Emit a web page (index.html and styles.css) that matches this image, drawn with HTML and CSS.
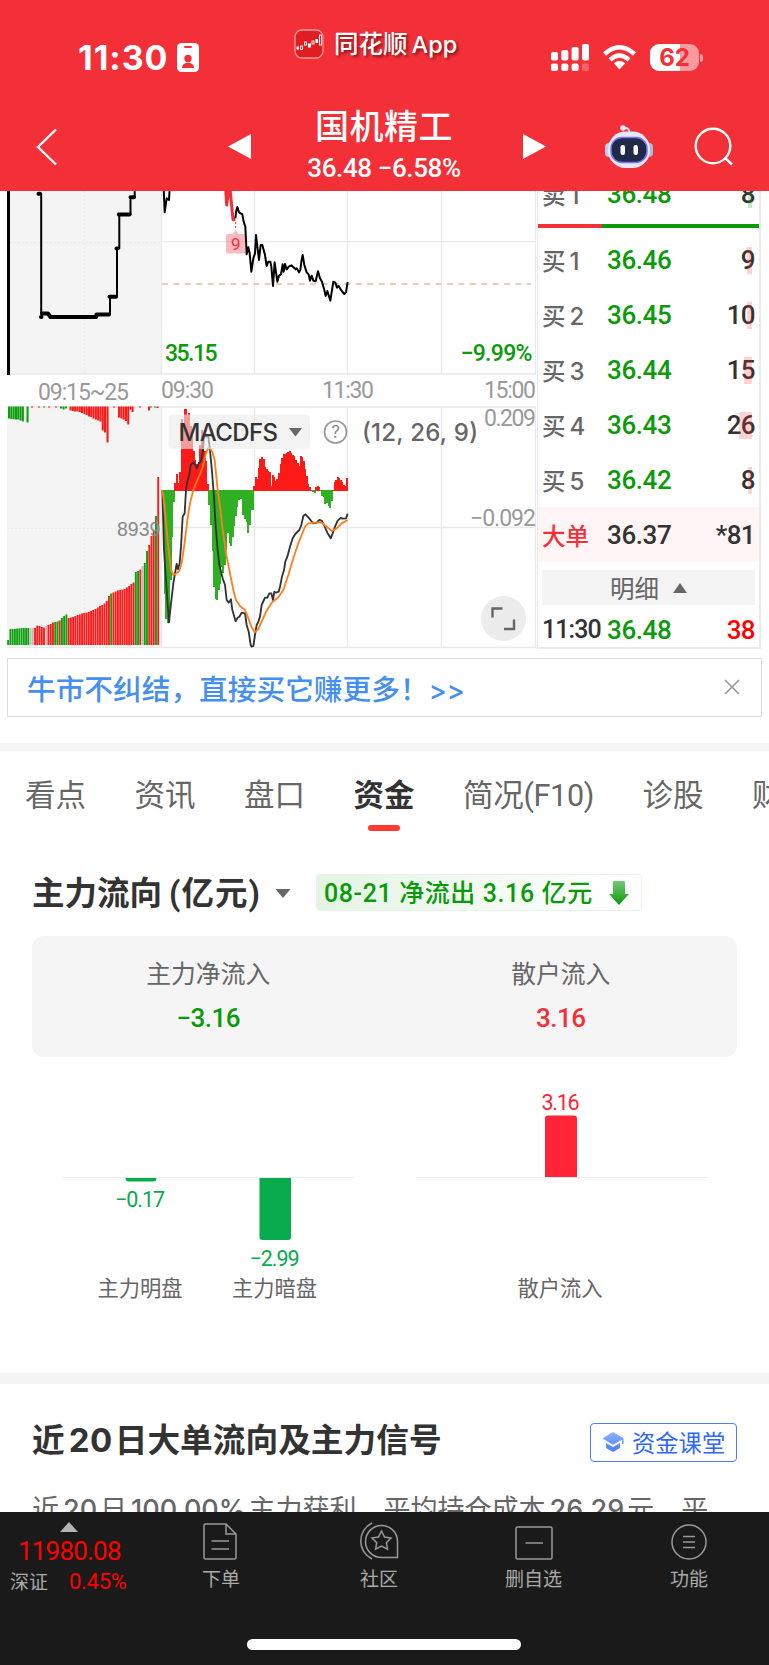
FILE: index.html
```
<!DOCTYPE html>
<html lang="zh-CN">
<head>
  <meta charset="UTF-8" />
  <meta name="viewport" content="width=device-width, initial-scale=1.0" />
  <title>国机精工</title>
  <link rel="stylesheet" href="styles.css">
</head>
<body>
  <header class="header">
    <div class="status">
      <span class="clock">11:30</span>
      <svg class="id-icon" width="22" height="29" viewBox="0 0 22 29">
        <rect width="22" height="29" rx="4.500" fill="#fff"/>
        <rect x="7" y="3" width="8" height="2" rx="1" fill="#f33038"/>
        <circle cx="11" cy="15.500" r="3.700" fill="#f33038"/>
        <path d="M5 25c0-7 12-7 12 0z" fill="#f33038"/>
      </svg>
      <svg class="app-icon" width="30" height="30" viewBox="0 0 30 30">
        <rect x="1" y="1" width="28" height="28" rx="7" fill="#e01d20" stroke="#f79a9c" stroke-width="1.300"/>
        <g fill="#fff"><rect x="2.500" y="17.500" width="2.500" height="3"/><rect x="14" y="14.500" width="3" height="4"/><rect x="21.500" y="10" width="2.500" height="4"/></g>
        <g fill="none" stroke="#fff" stroke-width=".9"><rect x="6.500" y="17" width="2" height="3.500"/><rect x="10.500" y="13" width="2" height="3"/><rect x="18" y="12" width="2" height="3"/><rect x="25.500" y="6" width="2" height="10"/></g>
      </svg>
      <span class="app-name">同花顺<b>App</b></span>
      <svg class="signal" width="39" height="28" viewBox="0 0 39 28" fill="#fff">
        <rect x="0" y="8" width="7" height="8.500" rx="2"/><rect x="10.300" y="6" width="7" height="10.500" rx="2"/><rect x="20.600" y="3" width="7" height="13.500" rx="2"/><rect x="31" y="0" width="7" height="16.500" rx="2"/>
        <rect x="0" y="19.500" width="7" height="7.500" rx="2"/><rect x="10.300" y="19.500" width="7" height="7.500" rx="2"/><rect x="20.600" y="19.500" width="7" height="7.500" rx="2"/><rect x="31" y="19.500" width="7" height="7.500" rx="2" opacity=".25"/>
      </svg>
      <svg class="wifi" width="33" height="25" viewBox="0 0 33 25">
        <g fill="none" stroke="#fff" stroke-width="4.400"><path d="M1.500 9Q16.500-4.500 31.500 9"/><path d="M7 14.800Q16.500 6.200 26 14.800"/></g>
        <path d="M10.800 18.300Q16.500 13.700 22.200 18.300L16.500 24.500z" fill="#fff"/>
      </svg>
      <div class="battery">62</div>
      <i class="battery-cap"></i>
    </div>
    <div class="navbar">
      <svg class="back" width="22" height="38" viewBox="0 0 22 38"><path d="M20 1.500L2 19l18 17.500" fill="none" stroke="#fff" stroke-width="2.400"/></svg>
      <svg class="prev" width="23" height="25" viewBox="0 0 23 25"><path d="M23 0v25L0 12.500z" fill="#fff"/></svg>
      <div class="stock">
        <h1>国机精工</h1>
        <p>36.48 −6.58%</p>
      </div>
      <svg class="next" width="23" height="25" viewBox="0 0 23 25"><path d="M0 0v25l23-12.500z" fill="#fff"/></svg>
      <svg class="robot" width="48" height="44" viewBox="0 0 48 44">
        <path d="M18 3.500q6-2 6.500 4" fill="none" stroke="#dfe0fa" stroke-width="2"/>
        <circle cx="18" cy="3" r="2.800" fill="#e8e8ff"/>
        <rect x="0" y="18" width="8" height="14" rx="4" fill="#c9cbee"/><rect x="40" y="18" width="8" height="14" rx="4" fill="#b4b5df"/>
        <rect x="3" y="6.500" width="42" height="36.500" rx="17.500" fill="#e6e7fa"/>
        <rect x="6" y="12.500" width="36" height="25" rx="11" fill="#20294a" stroke="#7776e8" stroke-width="1.500"/>
        <rect x="15.500" y="20" width="4.500" height="10" rx="2.200" fill="#fff"/><rect x="28.500" y="20" width="4.500" height="10" rx="2.200" fill="#fff"/>
      </svg>
      <svg class="search" width="40" height="40" viewBox="0 0 40 40" fill="none" stroke="#fff" stroke-width="2.400"><circle cx="19" cy="19" r="17.300"/><path d="M31 31l7 6.500"/></svg>
    </div>
  </header>

  <main>
    <section class="quote">
      <svg class="chart" width="537" height="459" viewBox="0 191 537 459">
        <rect x="7" y="191" width="154" height="183" fill="#f4f4f4"/>
        <rect x="7" y="406" width="154" height="242" fill="#f4f4f4"/>
        <g stroke="#e6e6e6" stroke-dasharray="1.500 2.500">
          <path d="M84.500 191V374M84.500 407V648M10 242.500H161M7 528.500H161"/>
        </g>
        <g stroke="#e9e9e9" stroke-width="1.300" fill="none">
          <path d="M161.500 191V374M254.500 191V374M347.500 191V374M441.500 191V374M535.500 191V374M161 241.700H536M7 374H536"/>
          <path d="M161.500 407V648M254.500 407V648M347.500 407V648M441.500 407V648M535.500 407V648M161 527.500H536M7 407H536M7 647.500H537"/>
        </g>
        <path d="M162 284H531" stroke="#dfc09a" stroke-width="1.300" stroke-dasharray="6 5.400"/>
        <path d="M8.500 191V375" stroke="#000" stroke-width="3"/>

        <!-- call auction -->
        <g fill="none" stroke="#000" stroke-linecap="round" stroke-linejoin="round">
          <path d="M41.200 194V314M110 314V297M117 297V248.500M119.300 248.500V214.500M130.500 214.500V197.500M134.700 197V190" stroke-width="2"/>
          <path d="M38.500 193.700h1.500M41 317h.5M42 313.500h6l2.500 3.500H96l.500-2.500H109M109.500 296.700H116M116.500 248.500h1M118.800 214.400H129.500M130.500 197.300H134" stroke-width="4"/>
        </g>

        <!-- intraday price -->
        <g transform="translate(150 185) scale(.33333)" fill="none" stroke="#000" stroke-width="6" stroke-linejoin="round">
          <path d="M41 10 44 82 50 40 57 45 59 10"/>
          <path stroke="#f33038" stroke-width="9" d="M227 10 230 60 237 10 240 10 249 104 256 103"/>
          <path d="M256 100 258 82 262 66 267 82 277 88 281 110 286 125 290 208 295 187 299 205 304 260 310 220 315 205 318 150 327 225 332 180 337 180 345 210 350 243 355 230 361 230 364 245 369 303 374 232 378 262 382 290 387 272 393 268 398 238 401 260 405 237 410 253 416 245 424 241 437 253 440 250 447 262 451 255 454 230 458 210 463 240 470 262 476 268 480 287 485 272 490 287 497 289 504 259 510 280 516 290 523 315 527 333 532 318 541 347 550 290 556 293 561 308 566 303 575 318 583 327 588 322 593 291"/>
        </g>
        <path d="M235.700 222V230" stroke="#f33038" stroke-dasharray="2 2"/>
        <path d="M228 234h4.500l3.200-4 3.200 4H244q1.500 0 1.500 1.500V252q0 1.500-1.500 1.500H227.500q-1.500 0-1.500-1.500V235.500q0-1.500 1.500-1.500z" fill="#f33038" opacity=".32"/>
        <text class="nine" x="235.700" y="249.500">9</text>

        <text class="num green" x="165" y="361" textLength="52.500">35.15</text>
        <text class="num green" x="460.500" y="361" textLength="72">−9.99%</text>
        <text class="num gray" x="38" y="400" textLength="91">09:15~25</text>
        <text class="num gray" x="161" y="398" textLength="53">09:30</text>
        <text class="num gray" x="322" y="398" textLength="52">11:30</text>
        <text class="num gray" x="484" y="398" textLength="52">15:00</text>

        <g id="auction"></g>
        <text class="vol" x="117" y="536">8939</text>
        <g id="macd" shape-rendering="crispEdges"></g>
        <g transform="translate(150 400) scale(.33333)" fill="none" stroke-width="5.500" stroke-linejoin="round">
          <path stroke="#333" d="M37 270 42 450 50 570 57 667 62 620 70 550 75 520 80 492 84 508 89 490 93 440 98 350 104 340 108 270 112 245 118 225 122 195 131 187 136 195 141 205 146 190 152 185 158 160 162 110 175 110 180 150 186 215 192 290 197 380 203 450 208 495 218 535 225 555 230 600 236 608 243 598 247 630 257 664 263 653 268 650 275 638 285 640 290 675 296 695 302 735 305 740 310 738 315 705 320 675 325 665 330 650 335 615 345 593 352 593 358 580 364 580 369 600 373 575 378 578 386 575 390 560 396 530 402 510 406 485 412 470 420 440 428 415 436 402 448 390 454 375 460 348 466 343 475 352 484 363 490 370 500 368 508 360 515 362 522 375 532 398 542 415 548 400 555 380 563 362 572 354 580 356 588 355 593 341"/>
          <path stroke="#ff7f1f" d="M37 270 44 320 50 390 57 460 63 510 70 525 80 520 88 512 95 490 105 420 112 360 120 310 130 270 140 245 152 218 160 195 168 160 174 145 180 145 188 158 194 180 202 260 210 320 220 405 230 470 240 520 250 570 258 600 270 618 285 630 295 655 305 682 314 697 325 687 335 665 350 632 365 608 385 592 400 570 415 525 430 475 445 430 455 405 465 380 475 370 490 368 515 368 530 380 545 393 560 385 575 370 593 360"/>
        </g>

        <rect x="168.500" y="414.500" width="141.500" height="34.500" rx="4" fill="#ececec" fill-opacity=".62"/>
        <text class="ind" x="178.500" y="441" textLength="99.500">MACDFS</text>
        <path d="M289 428h13l-6.500 8.500z" fill="#666"/>
        <circle cx="335.500" cy="432" r="11" fill="none" stroke="#999" stroke-width="1.700"/>
        <text class="help" x="335.500" y="438">?</text>
        <text class="param" x="362" y="440.500" textLength="116">(12, 26, 9)</text>
        <text class="num gray" x="484" y="426" textLength="52">0.209</text>
        <text class="num gray" x="470" y="526" textLength="66">−0.092</text>
        <circle cx="503.500" cy="618.500" r="22.500" fill="#ececec"/>
        <path d="M492.500 617.500V608.500H502.500M504 629H514V619.500" fill="none" stroke="#666" stroke-width="2.400"/>
      </svg>

      <div class="book">
        <div class="row ask"><span class="label">卖<b>1</b></span><span class="price">36.48</span><span class="qty">8<i class="depth sell" style="width:4px"></i></span></div>
        <div class="ratio"><i></i></div>
        <div class="row"><span class="label">买<b>1</b></span><span class="price">36.46</span><span class="qty">9<i class="depth" style="width:5px"></i></span></div>
        <div class="row"><span class="label">买<b>2</b></span><span class="price">36.45</span><span class="qty">10<i class="depth" style="width:5px"></i></span></div>
        <div class="row"><span class="label">买<b>3</b></span><span class="price">36.44</span><span class="qty">15<i class="depth" style="width:8px"></i></span></div>
        <div class="row"><span class="label">买<b>4</b></span><span class="price">36.43</span><span class="qty">26<i class="depth" style="width:13px"></i></span></div>
        <div class="row"><span class="label">买<b>5</b></span><span class="price">36.42</span><span class="qty">8<i class="depth" style="width:4px"></i></span></div>
        <div class="row big"><span class="label">大单</span><span class="price">36.37</span><span class="qty">*81</span></div>
        <div class="detail">明细<svg width="14" height="10" viewBox="0 0 14 10"><path d="M7 0l7 10H0z" fill="#666"/></svg></div>
        <div class="row tick"><span class="time">11:30</span><span class="price">36.48</span><span class="qty">38</span></div>
      </div>
    </section>

    <div class="banner">
      <span>牛市不纠结，直接买它赚更多！<b>&gt;&gt;</b></span>
      <svg width="16" height="16" viewBox="0 0 16 16"><path d="M1 1l14 14M15 1L1 15" stroke="#999" stroke-width="1.600"/></svg>
    </div>

    <nav class="tabs">
      <a>看点</a>
      <a>资讯</a>
      <a>盘口</a>
      <a class="active">资金</a>
      <a class="f10">简况(F10)</a>
      <a>诊股</a>
      <a>财务</a>
    </nav>

    <section class="flow">
      <div class="flow-head">
        <h2>主力流向<span>(亿元)</span></h2>
        <svg width="16" height="9" viewBox="0 0 16 9"><path d="M.5 0h15L8 9z" fill="#666"/></svg>
        <div class="badge">
          <span>08-21 净流出 3.16 亿元</span>
          <svg width="20" height="24" viewBox="0 0 20 24">
            <defs><linearGradient id="down" x1="0" y1="0" x2="0" y2="1"><stop offset="0" stop-color="#76c976"/><stop offset="1" stop-color="#0a9a0a"/></linearGradient></defs>
            <path d="M5 0h10q1 0 1 1v12h4L10 24 0 13h4V1q0-1 1-1z" fill="url(#down)"/>
          </svg>
        </div>
      </div>
      <div class="summary">
        <div><p>主力净流入</p><strong class="down">−3.16</strong></div>
        <div><p>散户流入</p><strong class="up">3.16</strong></div>
      </div>
      <svg class="bars" width="769" height="240" viewBox="0 1070 769 240">
        <path d="M63 1177.500H354M416 1177.500H707" stroke="#ebebeb"/>
        <path d="M125.500 1178h31q0 3.500-3 3.500h-25q-3 0-3-3.500z" fill="#07ab4b"/>
        <path d="M259.500 1178H291v59q0 3-3 3H262.500q-3 0-3-3z" fill="#07ab4b"/>
        <path d="M545 1177V1118.500q0-3 3-3H574q3 0 3 3V1177z" fill="#ff2436"/>
        <g class="bar-num">
          <text x="140" y="1207" fill="#07ab4b" textLength="50">−0.17</text>
          <text x="274.500" y="1265.500" fill="#07ab4b" textLength="50">−2.99</text>
          <text x="560.500" y="1109.500" fill="#ff2436" textLength="38">3.16</text>
        </g>
        <g class="bar-name">
          <text x="140" y="1296">主力明盘</text>
          <text x="274.500" y="1296">主力暗盘</text>
          <text x="560" y="1296">散户流入</text>
        </g>
      </svg>
    </section>

    <section class="signal-box">
      <div class="signal-head">
        <h2>近<span>20</span>日大单流向及主力信号</h2>
        <a class="lesson">
          <svg width="22" height="20" viewBox="0 0 22 20">
            <defs><linearGradient id="cap" x1="0" y1="0" x2="0" y2="1"><stop offset="0" stop-color="#8fb3ff"/><stop offset="1" stop-color="#4a7dff"/></linearGradient></defs>
            <path d="M11 0l10.500 6.300V12H20V7.700l-9 5L.5 6.500zM4 11l7 4 7-4v5l-7 4-7-4z" fill="url(#cap)"/>
          </svg>资金课堂</a>
      </div>
      <p class="signal-text">近<b>20</b>日<b class="pct">100.00%</b>主力获利，平均持仓成本<b>26.29</b>元，平</p>
    </section>
  </main>

  <footer class="toolbar">
    <div class="items">
      <div class="index">
        <svg width="18" height="10" viewBox="0 0 18 10"><path d="M9 0l9 10H0z" fill="#b3b3b3"/></svg>
        <strong>11980.08</strong>
        <p>深证<em>0.45%</em></p>
      </div>
      <div class="item order">
        <svg width="34" height="37" viewBox="0 0 34 37"><path d="M2.500 1H23l10 10v23.500q0 1.500-1.500 1.500H2.500Q1 36 1 34.500V2.500Q1 1 2.500 1zM23 1v10h10M8.500 18H26M8.500 26H26"/></svg>
        下单
      </div>
      <div class="item club">
        <svg width="40" height="38" viewBox="0 0 40 38"><path d="M38.500 35.500V19A16 16 0 1 0 22.500 35.500zM13 1A20 20 0 0 0 13 37"/><path d="M22.500 9l3 6 6.500 1-4.600 4.700 1.100 6.500-6-3.100-5.900 3.100 1.100-6.500L13 16l6.500-1z"/></svg>
        社区
      </div>
      <div class="item remove">
        <svg width="38" height="34" viewBox="0 0 38 34"><rect x="1" y="1" width="36" height="32" rx="1.500"/><path d="M10.500 17H28"/></svg>
        删自选
      </div>
      <div class="item more">
        <svg width="36" height="36" viewBox="0 0 36 36"><circle cx="18" cy="18" r="17"/><path d="M12 12.500H24M12 18H24M12 23.500H24"/></svg>
        功能
      </div>
    </div>
    <div class="home"></div>
  </footer>

  <script>
    const NS = 'http://www.w3.org/2000/svg';

    function addBar(parent, x, y, w, h, color) {
      const rect = document.createElementNS(NS, 'rect');
      rect.setAttribute('x', x);
      rect.setAttribute('y', y);
      rect.setAttribute('width', w);
      rect.setAttribute('height', h);
      rect.setAttribute('fill', color);
      parent.appendChild(rect);
    }

    const colors = { g: '#0fa00f', r: '#ff1a1a', n: '#bdbdbd' };

    // Call auction: matched volume (from the bottom)
    const auction = document.getElementById('auction');
    const matched = [
      5,16,16,16,16.5,16.7,17,17,17,17,17,17,17,19.5,19,18,17.5,19,20,21,22.5,23,23.5,24.5,27,29,30.5,
      27,27.5,28,29,30,30.5,31.5,32,32.5,33,34,35,36,37.5,39,40,41.5,44,49,51.5,52.5,53.5,54.5,
      55,55.5,56,57.5,59,61,62.5,73,74,75.5,79,82,94,100,109,115,129,168];
    const kinds = 'ggggggggggnnrrrrrnrrrggrgggrrrrrrrrrrrrrrrrrrrgrrrrrrrrrrggrnggrrrgr';
    matched.forEach((v, i) => {
      addBar(auction, 7.2 + i * 2.24, 645 - v, 1.9, v, colors[kinds[i]]);
    });

    // Call auction: unmatched volume (from the top)
    const unmatched = [
      [8,12,'g'],[10.3,12.5,'g'],[12.6,12.7,'g'],[14.9,13,'g'],[17.2,13,'g'],[19.5,14,'g'],[21.8,15,'g'],[26.5,16,'g'],
      [31,1,'r'],[38,1,'r'],[43,1,'g'],[48,1,'r'],[55,1,'r'],[60,2,'g'],[62.5,3,'g'],[65,2,'g'],
      [69.5,4,'r'],[71.8,4.5,'r'],[74.1,5,'r'],[76.4,5,'r'],[78.7,5.5,'r'],[81,6.5,'r'],[83.3,7.5,'r'],[85.6,8.5,'r'],
      [87.9,10,'r'],[90.2,10.5,'r'],[92.5,12,'r'],[94.8,13,'r'],[97.1,14,'r'],[99.4,15,'r'],[101.7,24,'r'],[104,26,'r'],[106.5,36,'r'],
      [113,1,'r'],[118,11,'r'],[120.3,12,'r'],[122.6,13,'r'],[124.9,14.5,'r'],[127.2,18,'r'],[129.5,3,'r'],[131.5,5.5,'r'],
      [139,1,'r'],[148,4,'r'],[150,1,'g'],[154,1,'g'],[156.5,1.5,'r']
    ];
    unmatched.forEach(([x, h, c]) => addBar(auction, x, 406.5, 2.1, h, colors[c]));

    // MACD histogram, one bar per minute
    const hist = [
      -10,-104,-129,-133,-130,-90,-47,-12,8,17,8,19,72,66,82,82,76,78,65,56,40,31,27,29,46,61,51,40,30,7,
      -15,-35,-61,-97,-109,-110,-100,-94,-77,-83,-75,-61,-43,-53,-56,-47,-36,-26,-17,-10,-9,-9,-25,-29,-32,-43,-35,-20,
      -20,5,14,12,23,32,34,32,24,22,20,19,5,16,14,10,12,18,27,33,37,37,38,39,40,38,36,35,31,28,
      25,35,34,30,22,15,7,4,1,-2,-3,4,5,4,-1,-6,-7,-14,-13,-16,-18,-11,1,9,11,14,13,11,9,6,5,13
    ];
    const macd = document.getElementById('macd');
    hist.forEach((v, i) => {
      addBar(macd, 162 + i * 1.547, v > 0 ? 490.5 - v : 489.5, 2, Math.abs(v) + 0.5, v > 0 ? '#ff1a1a' : '#2eb022');
    });
  </script>
</body>
</html>
```
FILE: styles.css
```
body {
  margin: 0;
  width: 769px;
  height: 1665px;
  overflow: hidden;
  background: #fff;
  color: #333;
  font-family: Roboto, "Noto Sans CJK SC", sans-serif;
}
h1, h2, p {
  margin: 0;
}
svg {
  display: block;
  flex: none;
}
i, em {
  font-style: normal;
}
main {
  overflow: hidden;
}
.header {
  height: 191px;
  background: #f33038;
  color: #fff;
}
.status {
  display: flex;
  align-items: center;
  height: 115px;
  padding-left: 78px;
}
.clock {
  width: 99px;
  font: bold 34px/40px Inter, sans-serif;
  letter-spacing: 1px;
}
.app-icon {
  margin: -27px 0 0 95px;
}
.app-name {
  width: 218px;
  margin: -26px 0 0 10px;
  font-size: 24.5px;
  line-height: 30px;
  font-weight: 500;
  text-shadow: 2px 2px 3px rgba(60, 0, 0, 0.6);
}
.app-name b {
  margin-left: 4px;
  font: 500 23.5px Inter, sans-serif;
}
.signal {
  margin-left: -1px;
}
.wifi {
  margin-left: 13px;
}
.battery {
  width: 49px;
  height: 27px;
  margin-left: 14px;
  border-radius: 9px;
  background: linear-gradient(90deg, #fff 62%, #f99a9e 62%);
  color: #f33038;
  font: bold 24px/27px Inter, sans-serif;
  text-align: center;
}
.battery-cap {
  width: 3px;
  height: 8px;
  margin-left: 1px;
  border-radius: 0 3px 3px 0;
  background: #f99a9e;
}
.navbar {
  display: flex;
  align-items: flex-start;
  margin-top: -1px;
  padding-left: 36px;
}
.back { margin-top: 14px; }
.prev { margin: 20px 0 0 170px; }
.stock {
  width: 266px;
  margin: -9px 6px 0 0;
  text-align: center;
}
.stock h1 {
  font-size: 34px;
  line-height: 44px;
  font-weight: 500;
  letter-spacing: 0.5px;
}
.stock p {
  font-size: 26px;
  line-height: 38px;
  font-weight: 500;
  letter-spacing: -0.4px;
}
.next { margin-top: 20px; }
.robot { margin: 11px 0 0 59px; }
.search { margin: 13px 0 0 41px; }

.quote {
  display: flex;
  height: 459px;
}
.num {
  font-size: 23px;
}
.green {
  fill: #0a9a0a;
  font-weight: 500;
}
.gray {
  fill: #999;
}
.nine {
  font-size: 17px;
  fill: #f33038;
  text-anchor: middle;
}
.vol {
  font: 19.5px "Liberation Sans", sans-serif;
  fill: #8a8a8a;
}
.ind {
  font: 500 24px Inter, sans-serif;
  fill: #333;
}
.param {
  font: 500 24px Inter, sans-serif;
  fill: #666;
}
.help {
  font: 17px Inter, sans-serif;
  fill: #888;
  text-anchor: middle;
}
.book {
  box-sizing: border-box;
  width: 224px;
  height: 457.5px;
  border: solid #ebebeb;
  border-width: 0 2px 2px 1px;
  overflow: hidden;
}
.row {
  display: flex;
  align-items: center;
  height: 55px;
  padding: 0 4px;
  font-size: 26px;
  font-weight: 500;
}
.row.ask {
  margin: -25px 0 3px;
}
.label {
  width: 65px;
  color: #666;
  font-size: 23.5px;
  font-weight: 500;
}
.label b {
  margin-left: 4px;
  font: 500 24px Inter, sans-serif;
}
.price {
  color: #0a9a0a;
  letter-spacing: -0.4px;
}
.qty {
  position: relative;
  margin-left: auto;
  letter-spacing: -0.6px;
}
.depth {
  position: absolute;
  right: 3px;
  top: 2px;
  height: 27px;
  background: rgba(243, 48, 56, 0.22);
}
.depth.sell {
  background: rgba(10, 154, 10, 0.22);
}
.ratio {
  height: 4px;
  background: #0a9a0a;
}
.ratio i {
  display: block;
  width: 64px;
  height: 4px;
  background: #f33038;
}
.ratio + .row {
  margin-top: 4px;
}
.row.big {
  background: #fff5f6;
}
.big .label {
  color: #f33038;
}
.big .price {
  color: #333;
}
.detail {
  display: flex;
  align-items: center;
  justify-content: center;
  height: 35px;
  margin: 8px 4px 0;
  gap: 14px;
  background: #f4f4f4;
  color: #666;
  font-size: 24.5px;
}
.row.tick {
  height: 49px;
}
.time {
  width: 65px;
  font-size: 25px;
  letter-spacing: -0.9px;
}
.tick .qty {
  color: #f00;
}

.banner {
  display: flex;
  align-items: center;
  justify-content: space-between;
  box-sizing: border-box;
  height: 59px;
  margin: 8px 7px 26px;
  padding: 0 21px 1px 19px;
  border: 1.5px solid #ddd;
  color: #4590ee;
  font-size: 28.7px;
  font-weight: 500;
}
.banner b {
  font: 500 27px Inter, sans-serif;
}
.tabs {
  display: flex;
  gap: 48.5px;
  height: 104px;
  padding-left: 25px;
  border-top: 8px solid #f4f4f4;
  color: #666;
  font-size: 30.5px;
  line-height: 89px;
  white-space: nowrap;
}
.f10 {
  letter-spacing: -0.3px;
}
.tabs .active {
  display: flex;
  flex-direction: column;
  align-items: center;
  color: #333;
  font-weight: 700;
}
.active::after {
  content: "";
  width: 32px;
  height: 6px;
  margin-top: -15px;
  border-radius: 3px;
  background: #ff3830;
}
.flow-head {
  display: flex;
  align-items: center;
  height: 38px;
  margin: 19px 0 24px;
  padding-left: 32px;
}
.flow-head h2 {
  width: 243px;
  padding-top: 1px;
  font-size: 32.5px;
  line-height: 38px;
  white-space: nowrap;
}
.flow-head h2 span {
  margin-left: 7px;
  letter-spacing: 1px;
}
.badge {
  display: flex;
  align-items: center;
  justify-content: space-between;
  box-sizing: border-box;
  width: 326px;
  height: 37px;
  margin: -1px 0 0 25px;
  padding: 0 12px 0 7px;
  border: 1.5px solid #e6f5e6;
  border-radius: 4px;
  background: linear-gradient(90deg, #e4f4e4, #fff 95%);
  color: #0a9a0a;
  font-size: 25px;
  font-weight: 500;
  letter-spacing: 0.6px;
  white-space: nowrap;
}
.badge span {
  margin-top: -4px;
}
.summary {
  display: grid;
  grid-template-columns: 1fr 1fr;
  box-sizing: border-box;
  height: 121px;
  margin: 0 32px;
  padding-top: 20px;
  border-radius: 12px;
  background: #f5f5f5;
  text-align: center;
}
.summary p {
  color: #666;
  font-size: 24.8px;
  line-height: 38px;
}
.summary strong {
  font-size: 26px;
  line-height: 48px;
  font-weight: 500;
  letter-spacing: -0.5px;
}
.down { color: #0a9a0a; }
.up { color: #f33038; }
.bars {
  margin-top: 13px;
}
.bar-num {
  font-size: 21.5px;
  text-anchor: middle;
}
.bar-name {
  font-size: 21.3px;
  fill: #666;
  text-anchor: middle;
}
.signal-box {
  margin-top: 63px;
  border-top: 11px solid #f4f4f4;
}
.signal-head {
  display: flex;
  align-items: center;
  justify-content: space-between;
  padding: 39px 32px 0;
}
.signal-head h2 {
  margin-top: -4px;
  font-size: 32.7px;
  line-height: 39px;
  white-space: nowrap;
}
.signal-head h2 span {
  margin: 0 2px 0 4px;
  font: bold 33px/39px Inter, sans-serif;
  letter-spacing: 0.5px;
}
.lesson {
  display: flex;
  align-items: center;
  gap: 8px;
  box-sizing: border-box;
  width: 147px;
  height: 39px;
  padding: 0 0 2px 11px;
  border: 1.5px solid #4a7dff;
  border-radius: 4px;
  color: #2f68ff;
  font-size: 23.3px;
  white-space: nowrap;
}
.signal-text {
  margin: 28px 0 0 32px;
  color: #666;
  font-size: 27px;
  line-height: 40px;
  white-space: nowrap;
}
.signal-text b {
  margin: 0 3px 0 4px;
  font: 500 27px Inter, sans-serif;
}
.toolbar {
  position: fixed;
  left: 0;
  top: 1512px;
  width: 769px;
  height: 153px;
  background: #1a1a1a;
  color: #aaa;
}
.items {
  display: grid;
  grid-template-columns: 142px 158px 158px 151px 160px;
  height: 127px;
}
.index {
  padding: 10px 0 0 10px;
}
.index svg {
  margin-left: 50px;
}
.index strong {
  display: block;
  margin-left: 8px;
  color: #f00;
  font-size: 26px;
  line-height: 38px;
  font-weight: 400;
  letter-spacing: -0.8px;
}
.index p {
  font-size: 19px;
  line-height: 24px;
}
.index em {
  margin-left: 21px;
  color: #f00;
  font-size: 22px;
  letter-spacing: -0.3px;
}
.item {
  display: flex;
  flex-direction: column;
  align-items: center;
  justify-content: flex-end;
  height: 82px;
  gap: 6px;
  font-size: 19px;
  line-height: 28px;
}
.item svg {
  fill: none;
  stroke: #999;
  stroke-width: 1.5;
}
.order svg {
  margin-right: 3px;
}
.home {
  width: 274px;
  height: 10.5px;
  margin: 0 0 0 247px;
  border-radius: 6px;
  background: #fff;
}
```
